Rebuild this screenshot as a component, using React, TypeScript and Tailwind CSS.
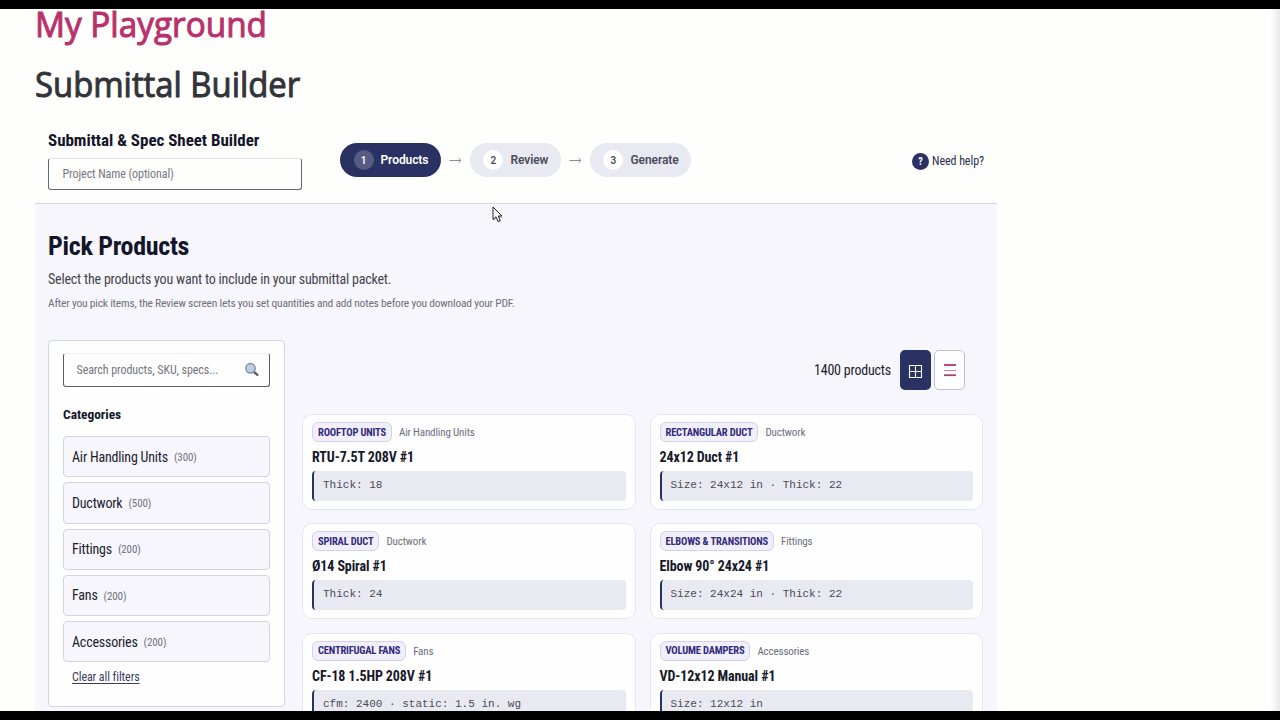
import React from "react";

const categories = [
  { name: "Air Handling Units", count: 300 },
  { name: "Ductwork", count: 500 },
  { name: "Fittings", count: 200 },
  { name: "Fans", count: 200 },
  { name: "Accessories", count: 200 },
];

const products = [
  { type: "Rooftop Units", category: "Air Handling Units", name: "RTU-7.5T 208V #1", spec: "Thick: 18" },
  { type: "Rectangular Duct", category: "Ductwork", name: "24x12 Duct #1", spec: "Size: 24x12 in · Thick: 22" },
  { type: "Spiral Duct", category: "Ductwork", name: "Ø14 Spiral #1", spec: "Thick: 24" },
  { type: "Elbows & Transitions", category: "Fittings", name: "Elbow 90° 24x24 #1", spec: "Size: 24x24 in · Thick: 22" },
  { type: "Centrifugal Fans", category: "Fans", name: "CF-18 1.5HP 208V #1", spec: "cfm: 2400 · static: 1.5 in. wg" },
  { type: "Volume Dampers", category: "Accessories", name: "VD-12x12 Manual #1", spec: "Size: 12x12 in" },
];

function Step({ n, label, active = false }: { n: number; label: string; active?: boolean }) {
  return (
    <div
      className={`flex h-[34px] items-center rounded-full pl-[13.5px] pr-[12.5px] font-['Roboto',sans-serif] text-[12px] tracking-[-0.08px] font-semibold font-stretch-normal ${
        active ? "bg-[#2a3263] text-white" : "bg-[#e9e9f1] text-[#4b4c59]"
      }`}
    >
      <span
        className={`mr-[7px] flex size-5 items-center justify-center rounded-full text-[10px] ${
          active ? "bg-[#555b82]" : "bg-white"
        }`}
      >
        {n}
      </span>
      {label}
    </div>
  );
}

function Arrow() {
  return (
    <svg width="13" height="8" viewBox="0 0 13 8" fill="none" stroke="#8d8e98" strokeWidth="1" className="mx-2">
      <path d="M0.5 4.5H12M9.5 2.3L12 4.5L9.5 6.7" />
    </svg>
  );
}

function Header() {
  return (
    <div className="flex h-[84px] shrink-0 border-b border-[#d3d5dc] pl-[13px] pr-[13px]">
      <div className="w-[254px]">
        <h2 className="mt-[6px] h-8 text-[17px] leading-7 font-bold tracking-[-0.03px] whitespace-nowrap text-[#14152a]">
          Submittal &amp; Spec Sheet Builder
        </h2>
        <div className="flex h-8 items-center rounded-[3px] border border-[#666674] border-t-[#e2e3e8] pl-[13.5px] text-[12px] tracking-[-0.08px] text-[#75767f]">
          Project Name (optional)
        </div>
      </div>
      <div className="ml-[38px] flex h-20 items-center">
        <Step n={1} label="Products" active />
        <Arrow />
        <Step n={2} label="Review" />
        <Arrow />
        <Step n={3} label="Generate" />
      </div>
      <div className="ml-auto flex h-[82px] items-center gap-[3px] text-[12px] tracking-[-0.06px] text-[#2a2d4c]">
        <span className="flex size-[17px] items-center justify-center rounded-full bg-[#2a3263] text-[10px] font-bold text-white font-stretch-normal">?</span>
        Need help?
      </div>
    </div>
  );
}

function SearchIcon() {
  return (
    <svg width="16" height="16" viewBox="0 0 16 16" fill="none">
      <path d="M9.5 9.5L13.4 12.8" stroke="#5b5e68" strokeWidth="2.4" strokeLinecap="round" />
      <circle cx="6.5" cy="6.3" r="4.7" fill="#bfcfe2" stroke="#8790a0" strokeWidth="1.5" />
    </svg>
  );
}

function Sidebar() {
  return (
    <aside className="h-[367px] w-[237px] rounded-[4px] border border-[#d2d6e0] bg-[#fefefe] pt-[12px] pr-[14px] pl-[14px]">
      <div className="flex h-[34px] items-center justify-between rounded-[3px] border border-[#5c5c6c] border-t-[#eeeff3] pr-[9px] pl-[12.5px] text-[12px] tracking-[-0.08px] text-[#75767f]">
        Search products, SKU, specs...
        <SearchIcon />
      </div>
      <h3 className="mt-[18px] h-5 text-[13.4px] leading-5 font-bold text-[#14152a]">Categories</h3>
      <div className="mt-[11px] flex flex-col gap-[5px]">
        {categories.map((c) => (
          <div key={c.name} className="flex h-[41.25px] items-center gap-[6px] rounded-[4px] border border-[#d2d5df] bg-[#f6f6fc] pt-px pl-2 text-[14px] tracking-[-0.2px] text-[#1d1e30]">
            {c.name}
            <span className="pt-[2px] text-[11px] tracking-[-0.1px] text-[#6f707c]">({c.count})</span>
          </div>
        ))}
      </div>
      <a className="mt-[5px] ml-[9px] block h-5 text-[12px] leading-5 tracking-[-0.08px] text-[#3a3c60] underline underline-offset-2">Clear all filters</a>
    </aside>
  );
}

function ProductCard({ p }: { p: (typeof products)[number] }) {
  return (
    <article className="h-24 rounded-[10px] border border-[#e6e6ef] bg-[#fefefe] px-[9px] pt-[7px]">
      <div className="flex h-5 items-center gap-[7px] whitespace-nowrap">
        <span className="flex h-5 items-center rounded-[6px] border border-[#d3d0ea] bg-[#f1effb] px-[5px] pt-px text-[10.5px] tracking-[-0.18px] font-bold text-[#312b7c] uppercase">
          {p.type}
        </span>
        <span className="pt-[2px] text-[11px] tracking-[-0.14px] text-[#6d6e7c]">{p.category}</span>
      </div>
      <h4 className="mt-[5px] h-5 text-[14px] leading-[21px] font-bold tracking-[-0.1px] text-[#17182a]">{p.name}</h4>
      <div className="mt-[4px] h-[30px] rounded-[4px] border-l-2 border-[#2a3263] bg-[#e9e9f2] pl-[9px] font-['Liberation_Mono',monospace] text-[11px] leading-[28px] whitespace-pre text-[#4a4b57]">
        {p.spec}
      </div>
    </article>
  );
}

function Results() {
  return (
    <section className="w-[681px]">
      <div className="flex h-[60px] items-center justify-end gap-[3.5px] pr-[18px]">
        <span className="mr-[5px] text-[14px] tracking-[-0.2px] text-[#1c1d2c]">1400 products</span>
        <button className="flex h-10 w-[31px] items-center justify-center rounded-[5px] bg-[#2a3263]">
          <svg width="15" height="15" viewBox="0 0 15 15" fill="none" stroke="#fff" strokeWidth="1.1" className="mt-[3px]">
            <path d="M1.5 1.5H13.5V13.5H1.5ZM7.5 1.5V13.5M1.5 7.5H13.5" />
          </svg>
        </button>
        <button className="flex h-10 w-[31px] items-center justify-center rounded-[5px] border border-[#bfc0d0] bg-[#fefefe]">
          <svg width="14" height="14" viewBox="0 0 14 14" fill="none">
            <path d="M1 2H13" stroke="#b8336b" strokeWidth="1.8" />
            <path d="M1 12.2H13" stroke="#a04a63" strokeWidth="1.8" />
            <path d="M1 7.5H13" stroke="#cc7f9c" strokeWidth="1" />
          </svg>
        </button>
      </div>
      <div className="mt-[14px] grid grid-cols-2 gap-x-[14px] gap-y-[13.4px]">
        {products.map((p) => (
          <ProductCard key={p.name} p={p} />
        ))}
      </div>
    </section>
  );
}

export default function App() {
  return (
    <div className="relative flex h-[720px] w-[1280px] flex-col overflow-hidden bg-[#fefefd] font-['Roboto_Condensed','Roboto',sans-serif] font-stretch-condensed">
      <div className="h-[9px] shrink-0 bg-black" />
      <div className="flex h-[702px] shrink-0 justify-between overflow-hidden">
        <div className="ml-[35px] flex w-[962px] flex-col">
          <h1 className="h-[30px] w-fit shrink-0 origin-left scale-x-[0.952] font-['Open_Sans','Noto_Sans',sans-serif] text-[35px] leading-[29px] font-normal whitespace-nowrap text-[#b9316b] [-webkit-text-stroke:1px_#b9316b] font-stretch-normal">
            My Playground
          </h1>
          <h1 className="mt-[21px] h-12 w-fit shrink-0 origin-left scale-x-[0.938] font-['Open_Sans','Noto_Sans',sans-serif] text-[35px] leading-[48px] font-normal whitespace-nowrap text-[#333439] [-webkit-text-stroke:1px_#333439] font-stretch-normal">
            Submittal Builder
          </h1>
          <div className="h-[12px] shrink-0" />
          <Header />
          <main className="h-[560px] shrink-0 bg-[#f6f6fc] px-[13px] pt-[24px]">
            <h2 className="h-9 text-[26px] leading-9 font-bold tracking-[-0.3px] text-[#14152a]">Pick Products</h2>
            <p className="mt-[5px] h-5 text-[14px] leading-5 tracking-[-0.2px] text-[#44454f]">
              Select the products you want to include in your submittal packet.
            </p>
            <p className="mt-[4px] h-5 text-[11.5px] leading-5 tracking-[-0.21px] text-[#6f707c]">
              After you pick items, the Review screen lets you set quantities and add notes before you download your PDF.
            </p>
            <div className="mt-[27px] flex gap-[17px]">
              <Sidebar />
              <Results />
            </div>
          </main>
        </div>
        <div className="w-[10px] bg-gradient-to-r from-[#fefefd] to-[#e9e9ea]" />
      </div>
      <div className="h-[9px] shrink-0 bg-black" />
      <svg width="12" height="18" viewBox="0 0 12 18" className="absolute top-[206px] left-[492px]">
        <path d="M2 2.5V15L5 12.5L7.2 16.8L9.2 15.8L7.4 12H11Z" fill="#000" opacity="0.2" />
        <path d="M1 1V13.5L4 10.8L6 15.5L8.2 14.5L6.2 10H10Z" fill="#fff" stroke="#222" strokeWidth="1" />
      </svg>
    </div>
  );
}
